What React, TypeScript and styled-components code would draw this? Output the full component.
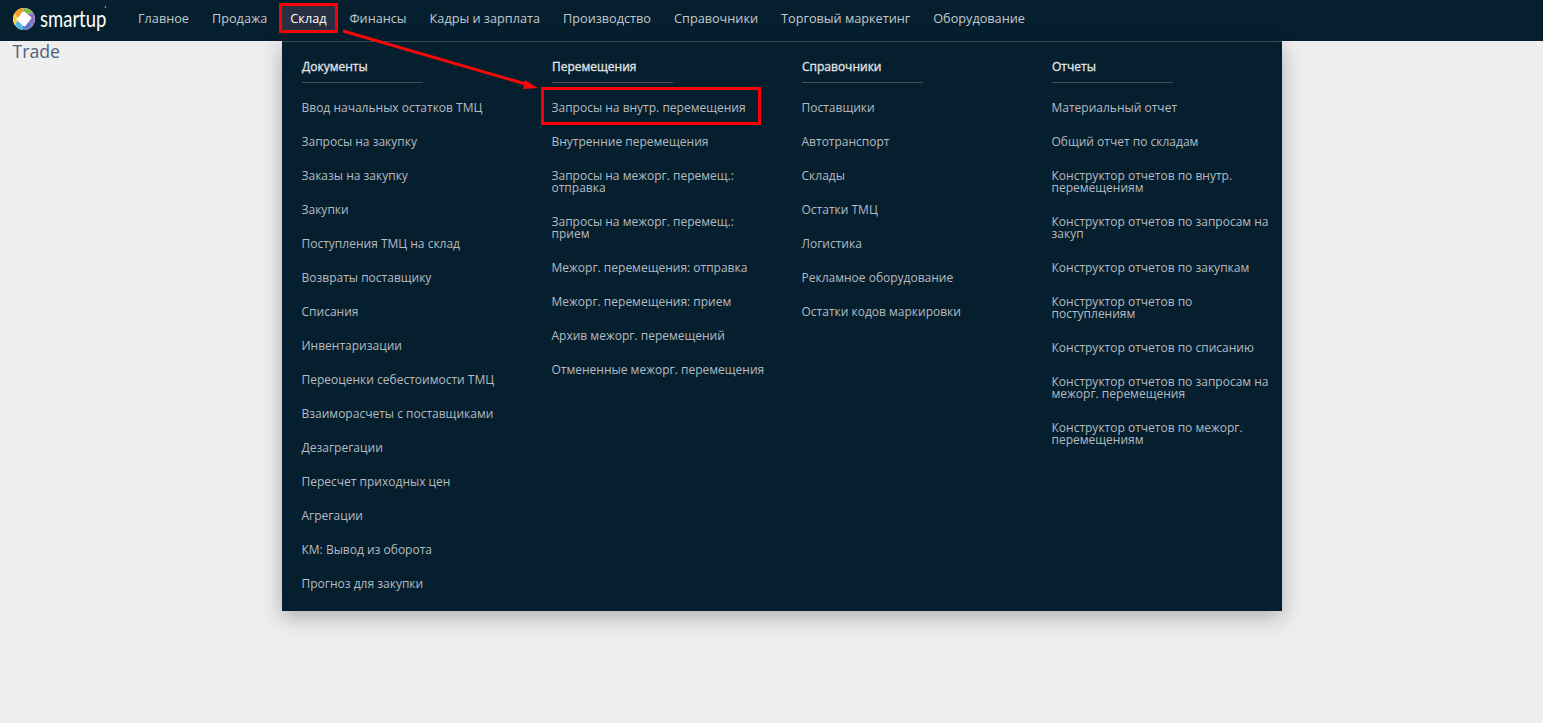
import React from "react";
import styled, { createGlobalStyle } from "styled-components";

const topMenu = [
  "Главное",
  "Продажа",
  "Склад",
  "Финансы",
  "Кадры и зарплата",
  "Производство",
  "Справочники",
  "Торговый маркетинг",
  "Оборудование",
];

const columns = [
  {
    title: "Документы",
    items: [
      "Ввод начальных остатков ТМЦ",
      "Запросы на закупку",
      "Заказы на закупку",
      "Закупки",
      "Поступления ТМЦ на склад",
      "Возвраты поставщику",
      "Списания",
      "Инвентаризации",
      "Переоценки себестоимости ТМЦ",
      "Взаиморасчеты с поставщиками",
      "Дезагрегации",
      "Пересчет приходных цен",
      "Агрегации",
      "КМ: Вывод из оборота",
      "Прогноз для закупки",
    ],
  },
  {
    title: "Перемещения",
    items: [
      "Запросы на внутр. перемещения",
      "Внутренние перемещения",
      "Запросы на межорг. перемещ.: отправка",
      "Запросы на межорг. перемещ.: прием",
      "Межорг. перемещения: отправка",
      "Межорг. перемещения: прием",
      "Архив межорг. перемещений",
      "Отмененные межорг. перемещения",
    ],
  },
  {
    title: "Справочники",
    items: [
      "Поставщики",
      "Автотранспорт",
      "Склады",
      "Остатки ТМЦ",
      "Логистика",
      "Рекламное оборудование",
      "Остатки кодов маркировки",
    ],
  },
  {
    title: "Отчеты",
    items: [
      "Материальный отчет",
      "Общий отчет по складам",
      "Конструктор отчетов по внутр. перемещениям",
      "Конструктор отчетов по запросам на закуп",
      "Конструктор отчетов по закупкам",
      "Конструктор отчетов по поступлениям",
      "Конструктор отчетов по списанию",
      "Конструктор отчетов по запросам на межорг. перемещения",
      "Конструктор отчетов по межорг. перемещениям",
    ],
  },
];

const Logo = () => (
  <LogoWrap>
    <svg width="22" height="22" viewBox="0 0 22 22">
      <circle cx="11" cy="11" r="11" fill="#ffffff" />
      <path d="M11 0 A11 11 0 0 1 20 5 L14 6 L9 4 Z" fill="#7cc04b" />
      <path d="M11 0 A11 11 0 0 0 1.5 5.5 L5 11 L9 4 Z" fill="#f39a2b" />
      <path d="M20 5 A11 11 0 0 1 19 18.5 L16 12 L14 6 Z" fill="#8a6fc0" />
      <path d="M19 18.5 A11 11 0 0 1 9 21.8 L10 18 L16 12 Z" fill="#5d77c9" />
      <path d="M9 21.8 A11 11 0 0 1 2 17 L5 11 L10 18 Z" fill="#4db8e0" />
      <path d="M2 17 A11 11 0 0 1 1.5 5.5 L5 11 Z" fill="#f4d23c" />
      <path
        d="M11 4.5 L17.5 10 L11.5 17.5 L4.5 11.5 Z"
        fill="#ffffff"
        stroke="#ffffff"
        strokeWidth="2"
        strokeLinejoin="round"
      />
    </svg>
    <LogoText>smartup</LogoText>
  </LogoWrap>
);

const App: React.FC = () => {
  return (
    <Page>
      <GlobalStyle />
      <Header>
        <Logo />
        <Nav>
          {topMenu.map((name) => (
            <NavItem key={name} $active={name === "Склад"}>
              {name}
            </NavItem>
          ))}
        </Nav>
      </Header>
      <Body>
        <PageTitle>Trade</PageTitle>
        <Dropdown>
          {columns.map((col) => (
            <Column key={col.title}>
              <ColumnTitle>{col.title}</ColumnTitle>
              {col.items.map((item) => (
                <MenuLink
                  key={item}
                  $marked={item === "Запросы на внутр. перемещения"}
                >
                  {item}
                </MenuLink>
              ))}
            </Column>
          ))}
        </Dropdown>
        <Arrow width="210" height="70" viewBox="0 0 210 70">
          <line x1="2" y1="2" x2="188" y2="56" stroke="#f50a0a" strokeWidth="3" />
          <polygon points="197,59 184,51 182,60" fill="#f50a0a" />
        </Arrow>
      </Body>
    </Page>
  );
};

export default App;

const GlobalStyle = createGlobalStyle`
  html, body {
    margin: 0;
    padding: 0;
    height: 100%;
    background: #eeeeee;
  }

  * {
    box-sizing: border-box;
  }
`;

const Page = styled.div`
  width: 100%;
  height: 723px;
  overflow: hidden;
  font-family: "Open Sans", "Liberation Sans", sans-serif;
`;

const Header = styled.header`
  display: flex;
  align-items: flex-start;
  height: 41px;
  padding: 3px 0 0 13px;
  background-color: #061f2f;
`;

const LogoWrap = styled.div`
  display: flex;
  align-items: center;
  gap: 5px;
  width: 114px;
  height: 32px;
  flex-shrink: 0;
`;

const LogoText = styled.span`
  position: relative;
  padding-bottom: 3px;
  font-family: "Lato", sans-serif;
  font-size: 24px;
  font-weight: 400;
  color: #ffffff;
  transform: scaleX(0.77);
  transform-origin: left center;

  &::after {
    content: "";
    position: absolute;
    top: 3px;
    right: 0;
    width: 2px;
    height: 2px;
    border-radius: 50%;
    background-color: #8d98a0;
  }
`;

const Nav = styled.nav`
  display: flex;
  align-items: flex-start;
  gap: 1px;
`;

const NavItem = styled.div<{ $active?: boolean }>`
  display: flex;
  align-items: center;
  height: 30px;
  padding: 0 11px;
  font-size: 12.7px;
  font-weight: 400;
  white-space: nowrap;
  color: ${(p) => (p.$active ? "#ffffff" : "#c2c8cc")};
  background-color: ${(p) => (p.$active ? "#2a3044" : "transparent")};
  outline: ${(p) => (p.$active ? "3px solid #fb0007" : "none")};
  outline-offset: -3px;
`;

const Body = styled.main`
  position: relative;
  padding-left: 12.5px;
`;

const PageTitle = styled.h1`
  margin: 0;
  font-size: 17.7px;
  font-weight: 400;
  line-height: 20px;
  color: #4f5f7c;
`;

const Dropdown = styled.div`
  position: absolute;
  top: 0;
  left: 282px;
  display: grid;
  grid-template-columns: repeat(4, 250px);
  width: 1000px;
  height: 570px;
  background-color: #061f2f;
  border-top: 1px solid #3a4b58;
  box-shadow: 0 6px 20px rgba(0, 0, 0, 0.28);
`;

const Column = styled.div`
  display: flex;
  flex-direction: column;
  align-items: flex-start;
  padding: 16px 12px 0 20px;
`;

const ColumnTitle = styled.div`
  width: 121px;
  height: 25px;
  margin-bottom: 16px;
  font-size: 12px;
  font-weight: 400;
  line-height: 18px;
  white-space: nowrap;
  color: #e2e6e8;
  -webkit-text-stroke: 0.3px #e2e6e8;
  border-bottom: 1px solid #3f505c;
`;

const MenuLink = styled.div<{ $marked?: boolean }>`
  position: relative;
  margin: 0 0 16px -0.5px;
  padding: 3px 0;
  font-size: 12px;
  font-weight: 400;
  line-height: 12px;
  color: #b5bbc0;

  ${(p) =>
    p.$marked &&
    `
    &::after {
      content: "";
      box-sizing: border-box;
      position: absolute;
      left: -10.5px;
      top: -12px;
      width: 220px;
      height: 38px;
      border: 3px solid #fb0007;
    }
  `}
`;

const Arrow = styled.svg`
  position: absolute;
  top: -12px;
  left: 341px;
`;
